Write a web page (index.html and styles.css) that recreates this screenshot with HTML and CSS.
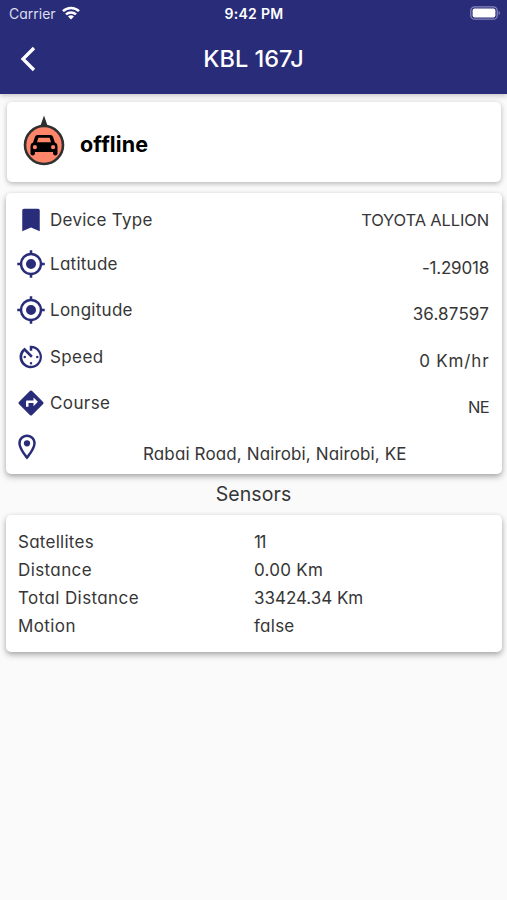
FILE: index.html
```html
<!DOCTYPE html>
<html lang="en">
<head>
<meta charset="utf-8">
<title>KBL 167J</title>
<link rel="stylesheet" href="styles.css">
</head>
<body>
<header class="top">
  <div class="status">
    <span class="carrier">Carrier
      <svg class="wifi" viewBox="0 0 18 14"><g fill="none" stroke="#fff" stroke-width="2.5"><path d="M1 5.2a11.4 11.4 0 0 1 16 0"/><path d="M4 8.4a7.2 7.2 0 0 1 10 0"/></g><path d="M9 13.6L6 10.6a4.3 4.3 0 0 1 6 0z" fill="#fff"/></svg>
    </span>
    <span class="clock">9:42 PM</span>
    <svg class="battery" viewBox="0 0 31 14"><rect x=".8" y=".8" width="26.4" height="12.4" rx="3.8" fill="none" stroke="#8487bb" stroke-width="1.3"/><rect x="2.6" y="2.6" width="22.8" height="8.8" rx="1.8" fill="#fff"/><path d="M28.6 5v4q1.4-.6 1.4-2t-1.4-2z" fill="#8487bb"/></svg>
  </div>
  <div class="bar">
    <svg class="back" viewBox="0 0 16 26"><path d="M14 2L3 13l11 11" fill="none" stroke="#fff" stroke-width="3.3"/></svg>
    <h1 class="title">KBL 167J</h1>
  </div>
</header>
<main>
  <section class="card state">
    <svg class="car" viewBox="0 0 44 50"><path d="M22-1.500l4 11.500h-8z" fill="#2e302f"/><circle cx="22" cy="28" r="19" fill="#fe8569" stroke="#2e302f" stroke-width="2.600"/><path fill="#000" fill-rule="evenodd" d="M15.500 18h13q2 0 2.600 2l1.800 5.500q2.600.8 2.600 3.500v7.500q0 2-2.200 2t-2.200-2v-1.500H12.900v1.500q0 2-2.200 2t-2.200-2V29q0-2.700 2.600-3.500l1.800-5.500q.6-2 2.600-2zM16.300 20.800L15 25.300h14l-1.300-4.500zM12.900 28.100a2.100 2.100 0 1 0 0 4.200 2.100 2.100 0 0 0 0-4.200zM31.100 28.100a2.100 2.100 0 1 0 0 4.200 2.100 2.100 0 0 0 0-4.200z"/></svg>
    <span class="offline">offline</span>
  </section>
  <section class="card details">
    <div class="row first"><svg class="ico" viewBox="0 0 24 24"><path d="M17.500 3h-11C5.500 3 5 3.600 5 4.500V21l7-3 7 3V4.500c0-.9-.5-1.500-1.500-1.500z"/></svg><span class="label">Device Type</span><span class="value model">TOYOTA ALLION</span></div>
    <div class="row"><svg class="ico" viewBox="0 0 24 24"><path d="M12 8a4 4 0 1 0 0 8 4 4 0 0 0 0-8zm8.940 3A8.990 8.990 0 0 0 13 3.060V1h-2v2.060A8.990 8.990 0 0 0 3.060 11H1v2h2.060A8.990 8.990 0 0 0 11 20.940V23h2v-2.060A8.990 8.990 0 0 0 20.940 13H23v-2h-2.060zM12 19a7 7 0 1 1 0-14 7 7 0 0 1 0 14z"/></svg><span class="label">Latitude</span><span class="value">-1.29018</span></div>
    <div class="row"><svg class="ico" viewBox="0 0 24 24"><path d="M12 8a4 4 0 1 0 0 8 4 4 0 0 0 0-8zm8.940 3A8.990 8.990 0 0 0 13 3.060V1h-2v2.060A8.990 8.990 0 0 0 3.060 11H1v2h2.060A8.990 8.990 0 0 0 11 20.940V23h2v-2.060A8.990 8.990 0 0 0 20.940 13H23v-2h-2.060zM12 19a7 7 0 1 1 0-14 7 7 0 0 1 0 14z"/></svg><span class="label">Longitude</span><span class="value longitude">36.87597</span></div>
    <div class="row"><svg class="ico" viewBox="0 0 24 24"><path d="M11 17a1 1 0 1 0 2 0 1 1 0 0 0-2 0zm0-14v4h2V5.080c3.390.49 6 3.390 6 6.920a7 7 0 1 1-12.200-4.680L12 12.500l1.410-1.410-6.610-6.610v.02A9 9 0 1 0 12 3h-1zm7 9a1 1 0 1 0-2 0 1 1 0 0 0 2 0zM6 12a1 1 0 1 0 2 0 1 1 0 0 0-2 0z"/></svg><span class="label wide">Speed</span><span class="value speed">0 Km/hr</span></div>
    <div class="row"><svg class="ico" viewBox="0 0 24 24"><path d="M21.710 11.290l-9-9a1 1 0 0 0-1.410 0l-9 9a1 1 0 0 0 0 1.410l9 9a1 1 0 0 0 1.410 0l9-9a1 1 0 0 0 0-1.410zM14 14.500V12h-4v3H8v-4c0-.55.450-1 1-1h5V7.500l3.500 3.500-3.500 3.500z"/></svg><span class="label wide">Course</span><span class="value course">NE</span></div>
    <div class="row"><svg class="ico pin" viewBox="0 0 24 24"><path d="M12 2C8.130 2 5 5.130 5 9c0 5.250 7 13 7 13s7-7.750 7-13c0-3.870-3.130-7-7-7zM7 9a5 5 0 0 1 10 0c0 2.880-2.880 7.190-5 9.880C9.920 16.210 7 11.850 7 9z"/><circle cx="12" cy="9" r="2.500"/></svg><span class="address">Rabai Road, Nairobi, Nairobi, KE</span></div>
  </section>
  <h2 class="heading">Sensors</h2>
  <section class="card sensors">
    <span>Satellites</span><span class="count">11</span>
    <span class="wide">Distance</span><span>0.00 Km</span>
    <span class="wide">Total Distance</span><span class="total">33424.34 Km</span>
    <span class="wide">Motion</span><span>false</span>
  </section>
</main>
</body>
</html>
```
FILE: styles.css
```css
* { box-sizing: border-box; }
body { margin: 0; min-height: 900px; background: #fafafa; color: #363636; font: 17px/24px Inter, "Open Sans", sans-serif; font-feature-settings: "cv11"; }
h1, h2 { margin: 0; font-weight: 400; }
svg { display: block; flex: none; overflow: visible; }
.top { height: 94px; background: #292c78; color: #fff; box-shadow: 0 2px 5px rgba(0,0,0,.2); }
.status { display: grid; grid-template-columns: 1fr auto 1fr; align-items: center; height: 27px; padding: 0 6px 0 9px; }
.carrier { display: flex; align-items: center; gap: 6px; font-size: 14px; color: #dcddf0; }
.wifi { width: 18px; height: 14px; margin-top: -1px; }
.clock { margin-left: -2px; font-size: 14px; font-weight: 600; letter-spacing: .3px; }
.battery { width: 31px; height: 14px; justify-self: end; margin-top: -1px; }
.bar { display: grid; grid-template-columns: 60px 1fr 60px; align-items: center; height: 64px; }
.back { width: 16px; height: 26px; margin-left: 20px; }
.title { margin-top: -1px; text-align: center; font-size: 23.5px; font-weight: 500; }
main { padding: 8px 5px 0 6px; }
.card { background: #fff; border-radius: 5px; box-shadow: 0 3px 6px rgba(0,0,0,.28), 0 1px 4px rgba(0,0,0,.1); }
.state { display: flex; align-items: center; height: 80px; margin: 0 1px 11px; padding: 0 15px; gap: 14px; box-shadow: 0 2px 5px rgba(0,0,0,.22), 0 0 6px rgba(0,0,0,.07); }
.car { width: 44px; height: 50px; }
.offline { margin-top: 4px; font-size: 21.5px; font-weight: 700; color: #000; letter-spacing: .15px; }
.details { height: 281px; padding: 15px 13px 0 10px; }
.row { display: flex; align-items: flex-start; height: 46.5px; }
.first { height: 42.7px; }
.ico { width: 30px; height: 30px; margin-top: -2px; fill: #292c78; }
.first .ico { margin-top: -3px; }
.row .pin { margin: -5px 0 0 -4px; }
.label { margin: 1px 0 0 4px; letter-spacing: .27px; }
.first .label { margin-top: 0; }
.label.wide, .wide { letter-spacing: .4px; }
.value { margin: 5px 0 0 auto; letter-spacing: -.2px; }
.first .value { margin-top: 0; }
.model { font-size: 16.5px; letter-spacing: -.15px; }
.longitude { letter-spacing: .15px; }
.speed { margin-right: -.5px; letter-spacing: .85px; }
.course { font-size: 16.5px; letter-spacing: -.7px; }
.address { margin: 5px 0 0 101px; letter-spacing: .13px; }
.heading { height: 41px; line-height: 41px; text-align: center; text-indent: -1px; font-size: 19.5px; letter-spacing: .1px; }
.sensors { height: 137px; display: grid; grid-template-columns: 236px 1fr; grid-auto-rows: 28px; padding: 13px 12px 12px; line-height: 28px; letter-spacing: .27px; }
.count { letter-spacing: -1.5px; }
.total { letter-spacing: -.03px; }
```
